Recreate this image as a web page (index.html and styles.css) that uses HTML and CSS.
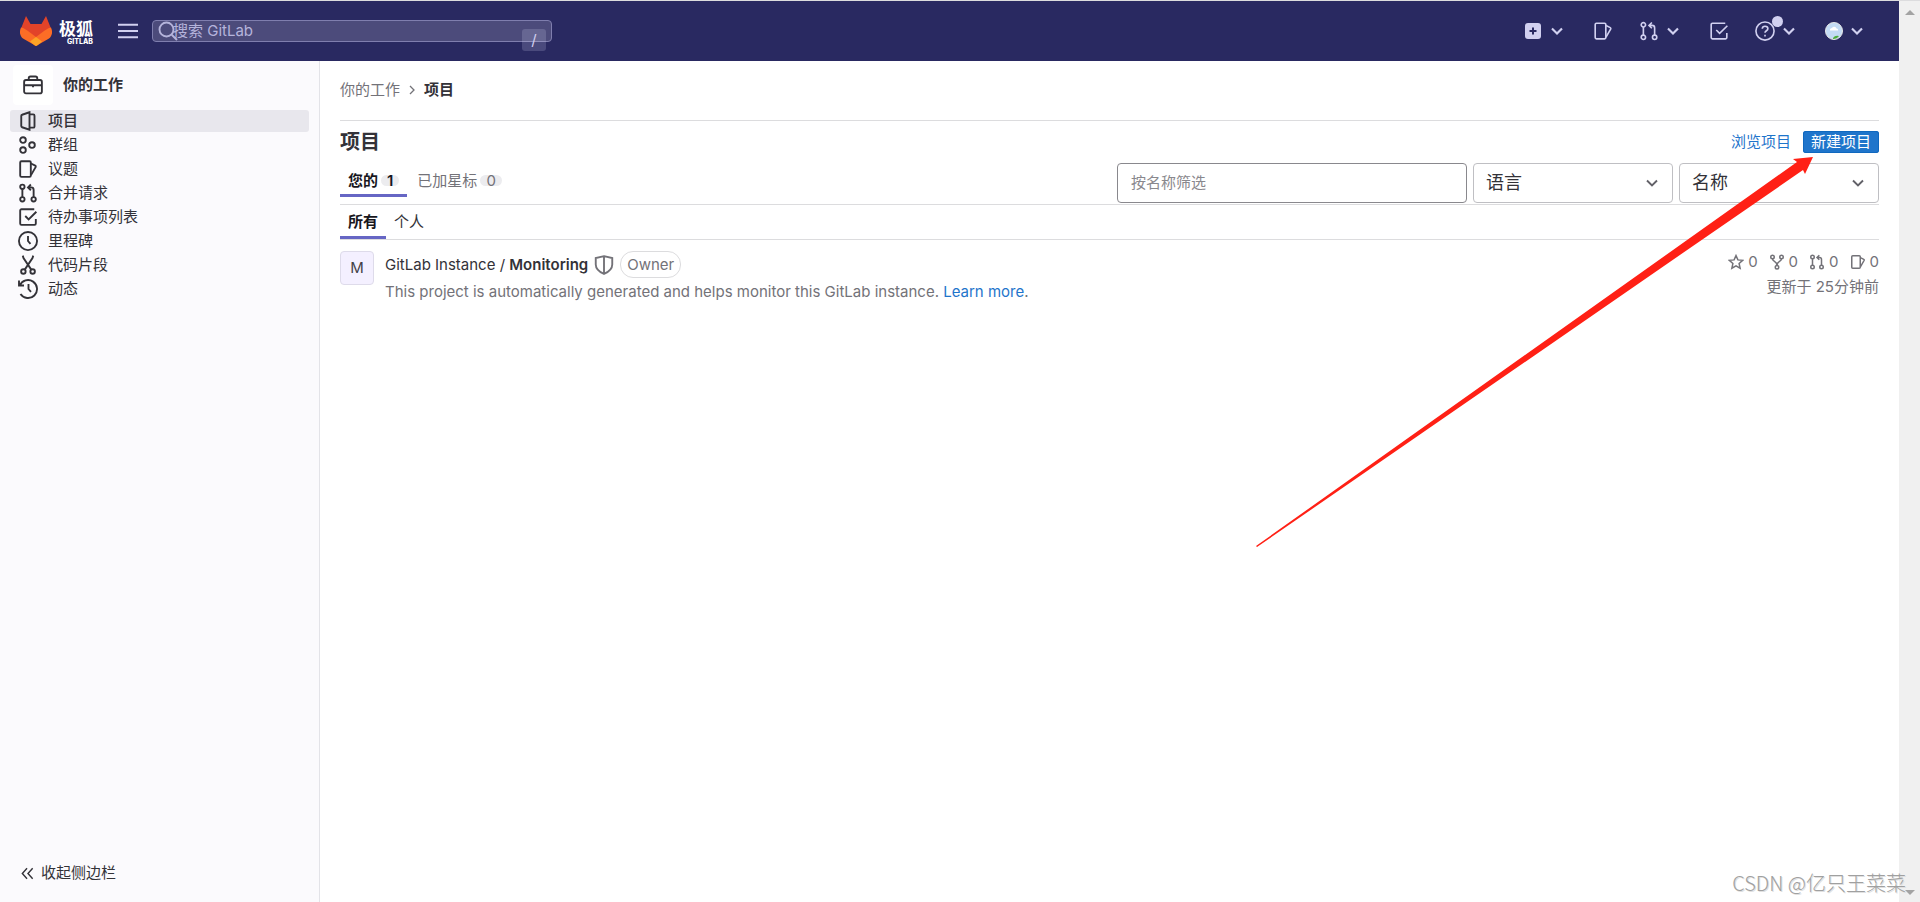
FILE: index.html
```html
<!DOCTYPE html>
<html lang="zh-CN">
<head>
<meta charset="utf-8">
<title>项目 · GitLab</title>
<link rel="stylesheet" href="styles.css">
</head>
<body>
<svg class="sprite" aria-hidden="true">
  <symbol id="i-chevron" viewBox="0 0 16 16"><path d="M4 6l4 4 4-4"/></symbol>
  <symbol id="i-menu" viewBox="0 0 16 16"><path d="M0 3h16M0 8h16M0 13h16"/></symbol>
  <symbol id="i-search" viewBox="0 0 16 16"><circle cx="6.8" cy="6.8" r="5.6"/><path d="M11 11l4.2 4.2"/></symbol>
  <symbol id="i-issues" viewBox="0 0 16 16"><rect x="1.75" y="1.75" width="8.5" height="12.5" rx="1"/><path d="M10.4 3.6l3.4 1.7a.8.8 0 0 1 .4 1l-3.8 6.6"/></symbol>
  <symbol id="i-merge" viewBox="0 0 16 16"><circle cx="3.5" cy="3" r="1.75"/><circle cx="3.5" cy="13" r="1.75"/><circle cx="12.5" cy="13" r="1.75"/><path d="M3.5 4.8v6.4M12.5 11.2V5.5a2 2 0 0 0-2-2H8.6M10.3 1.2L8 3.5l2.3 2.3"/></symbol>
  <symbol id="i-todo" viewBox="0 0 16 16"><path d="M13 1.75H2.75a1 1 0 0 0-1 1v10.5a1 1 0 0 0 1 1h10.5a1 1 0 0 0 1-1V9.5M5.8 7.2l2.7 2.7L14.7 3.8"/></symbol>
  <symbol id="i-project" viewBox="0 0 16 16"><path d="M9.2 1L3.3 3a1 1 0 0 0-.7 1v8a1 1 0 0 0 .7 1l5.9 2zM9.2 2.7h3a1 1 0 0 1 1 1v8.6a1 1 0 0 1-1 1h-3"/></symbol>
  <symbol id="i-group" viewBox="0 0 16 16"><circle cx="4" cy="4" r="2.25"/><circle cx="4" cy="12" r="2.25"/><circle cx="11.2" cy="8" r="2.25"/></symbol>
  <symbol id="i-clock" viewBox="0 0 16 16"><circle cx="8" cy="8" r="7.25"/><path d="M8 4v4l2 2.3"/></symbol>
  <symbol id="i-snippet" viewBox="0 0 16 16"><circle cx="4.3" cy="13.2" r="1.8"/><circle cx="11.7" cy="13.2" r="1.8"/><path d="M3.8.5l.6 2 6.2 9.2M12.2.5l-.6 2-6.2 9.2"/></symbol>
  <symbol id="i-history" viewBox="0 0 16 16"><path d="M1.4 5.2A7.2 7.2 0 1 1 2 12M.8 1.2v4h4M8.4 4v4l2 2.3"/></symbol>
  <symbol id="i-work" viewBox="0 0 16 16"><rect x=".9" y="4" width="14.2" height="10.7" rx="1.5"/><path d="M4.6 4V2.6a1.4 1.4 0 0 1 1.4-1.4h4a1.4 1.4 0 0 1 1.4 1.4V4M1 8.2h14M8 8v1.8"/></symbol>
  <symbol id="i-help" viewBox="0 0 16 16"><circle cx="8" cy="8" r="7.25"/><path d="M5.8 6.2A2.2 2.2 0 0 1 8 4.2c1.3 0 2.3.8 2.3 2 0 1.6-2.3 1.6-2.3 3.2M8 11v1.4"/></symbol>
  <symbol id="i-star" viewBox="0 0 16 16"><path d="M8 1.6l1.9 4.3 4.8.4-3.6 3.2 1 4.7L8 11.8l-4.1 2.4 1-4.7-3.6-3.2 4.8-.4z"/></symbol>
  <symbol id="i-fork" viewBox="0 0 16 16"><circle cx="3.5" cy="3" r="1.75"/><circle cx="12.5" cy="3" r="1.75"/><circle cx="8" cy="13.2" r="1.75"/><path d="M3.5 4.8c0 3.2 4.500 2 4.500 6.6M12.5 4.8c0 3.2-4.500 2-4.500 6.6"/></symbol>
  <symbol id="i-shield" viewBox="0 0 16 16"><path d="M8 .9l6.600 1.500v5.100c0 3.200-2.600 5.800-6.600 7.600-4-1.800-6.600-4.400-6.600-7.600V2.400zM8 1v14"/></symbol>
  <symbol id="i-collapse" viewBox="0 0 16 16"><path d="M7.500 2.500L2.500 8l5 5.500M13.500 2.500L8.500 8l5 5.500"/></symbol>
</svg>
<div class="window">
  <div class="page">
    <header class="topbar">
      <a class="brand" href="#" aria-label="极狐 GitLab">
        <svg class="fox" viewBox="0 0 32 30"><path fill="#e24329" d="M6 0L1 12.500 0 17l16 13 16-13-1-4.500L26 0l-4.500 8h-11z"/><path fill="#fc6d26" d="M1 11.500c-2 4.500-1 8.500 2 11L16 30l13-7.500c3-2.500 4-6.500 2-11-3 .6-5 2-7 3.500l-8 6-8-6c-2-1.500-4-2.900-7-3.500z"/><path fill="#fca326" d="M10 25.500l6-4.500 6 4.500-4.500 3.700a2.500 2.500 0 0 1-3 0z"/></svg>
        <span class="wordmark"><b>极狐</b><small>GITLAB</small></span>
      </a>
      <button class="menu" aria-label="菜单"><svg class="icon"><use href="#i-menu"/></svg></button>
      <form class="search">
        <svg class="icon search-icon"><use href="#i-search"/></svg>
        <input type="text" placeholder="搜索 GitLab" aria-label="搜索 GitLab">
        <kbd>/</kbd>
      </form>
      <nav class="tools" aria-label="工具">
        <button aria-label="新建"><svg class="plus" viewBox="0 0 16 16"><rect width="16" height="16" rx="3" fill="#d1d0f0"/><path d="M8 4.500v7M4.500 8h7" stroke="#292961" stroke-width="2"/></svg><svg class="icon caret"><use href="#i-chevron"/></svg></button>
        <button aria-label="议题"><svg class="icon"><use href="#i-issues"/></svg></button>
        <button aria-label="合并请求"><svg class="icon"><use href="#i-merge"/></svg><svg class="icon caret"><use href="#i-chevron"/></svg></button>
        <button aria-label="待办事项"><svg class="icon"><use href="#i-todo"/></svg></button>
        <button class="help" aria-label="帮助"><svg class="icon"><use href="#i-help"/></svg><i class="dot"></i><svg class="icon caret"><use href="#i-chevron"/></svg></button>
        <button aria-label="用户"><svg class="avatar" viewBox="0 0 18 18"><circle cx="9" cy="9" r="8.500" fill="#c3dbf5" stroke="#e6e6e6"/><path d="M5 8.500a2 2 0 0 1 2-2.500 2.500 2.500 0 0 1 4.500.5A1.500 1.500 0 0 1 13 8.500z" fill="#fff"/><path d="M8 16q2-3 6-2-2 3-6 3z" fill="#4cad3d"/></svg><svg class="icon caret"><use href="#i-chevron"/></svg></button>
      </nav>
    </header>
    <div class="body">
      <aside class="sidebar">
        <div class="context"><span class="context-icon"><svg class="icon"><use href="#i-work"/></svg></span><strong>你的工作</strong></div>
        <nav class="side-nav" aria-label="你的工作">
          <a class="active" href="#"><svg class="icon"><use href="#i-project"/></svg>项目</a>
          <a href="#"><svg class="icon"><use href="#i-group"/></svg>群组</a>
          <a href="#"><svg class="icon"><use href="#i-issues"/></svg>议题</a>
          <a href="#"><svg class="icon"><use href="#i-merge"/></svg>合并请求</a>
          <a href="#"><svg class="icon"><use href="#i-todo"/></svg>待办事项列表</a>
          <a href="#"><svg class="icon"><use href="#i-clock"/></svg>里程碑</a>
          <a href="#"><svg class="icon"><use href="#i-snippet"/></svg>代码片段</a>
          <a href="#"><svg class="icon"><use href="#i-history"/></svg>动态</a>
        </nav>
        <button class="collapse"><svg class="icon"><use href="#i-collapse"/></svg>收起侧边栏</button>
      </aside>
      <main class="content">
        <nav class="breadcrumb" aria-label="面包屑"><a href="#">你的工作</a><svg class="icon"><use href="#i-chevron"/></svg><a class="current" href="#">项目</a></nav>
        <div class="title-row">
          <h1>项目</h1>
          <div class="actions"><a href="#">浏览项目</a><button class="primary">新建项目</button></div>
        </div>
        <div class="filter-row">
          <nav class="tabs" aria-label="项目列表">
            <a class="selected" href="#">您的<span class="count">1</span></a>
            <a href="#">已加星标<span class="count">0</span></a>
          </nav>
          <form class="filters">
            <input type="text" placeholder="按名称筛选" aria-label="按名称筛选">
            <div class="select"><select aria-label="语言"><option>语言</option></select><svg class="icon"><use href="#i-chevron"/></svg></div>
            <div class="select"><select aria-label="排序"><option>名称</option></select><svg class="icon"><use href="#i-chevron"/></svg></div>
          </form>
        </div>
        <nav class="tabs subtabs" aria-label="范围"><a class="selected" href="#">所有</a><a href="#">个人</a></nav>
        <article class="project">
          <span class="letter">M</span>
          <div class="summary">
            <h2><a href="#">GitLab Instance / <b>Monitoring</b></a><svg class="icon"><use href="#i-shield"/></svg><span class="role">Owner</span></h2>
            <p>This project is automatically generated and helps monitor this GitLab instance. <a href="#">Learn more</a>.</p>
          </div>
          <div class="meta">
            <div class="stats">
              <a href="#"><svg class="icon"><use href="#i-star"/></svg>0</a>
              <a href="#"><svg class="icon"><use href="#i-fork"/></svg>0</a>
              <a href="#"><svg class="icon"><use href="#i-merge"/></svg>0</a>
              <a href="#"><svg class="icon"><use href="#i-issues"/></svg>0</a>
            </div>
            <span>更新于 25分钟前</span>
          </div>
        </article>
      </main>
    </div>
  </div>
  <div class="scroll" aria-hidden="true">
    <svg viewBox="0 0 10 5"><path d="M0 5l5-5 5 5z"/></svg>
    <svg viewBox="0 0 10 5"><path d="M0 0l5 5 5-5z"/></svg>
  </div>
  <svg class="arrow" viewBox="0 0 558 392" aria-hidden="true"><path d="M557 1L537 3l4 3L0 390l1 1L547 14l2 4z"/></svg>
  <span class="watermark">CSDN @亿只王菜菜</span>
</div>
</body>
</html>
```
FILE: styles.css
```css
* { box-sizing: border-box; }
body {
  margin: 0;
  color: #333238;
  background: #fff;
  font: 15px/22px Inter, "Noto Sans CJK SC", sans-serif;
}
a { color: inherit; text-decoration: none; }
button, input, select { font: inherit; color: inherit; }
button { display: flex; align-items: center; padding: 0; border: 0; background: none; }
h1, h2, p { margin: 0; }
.sprite { position: absolute; width: 0; height: 0; }
.icon { flex: none; width: 20px; height: 20px; fill: none; stroke: currentColor; stroke-width: 1.5; }
.window { position: relative; display: flex; min-height: 100vh; border-top: 1px solid #dcdcde; }
.page { flex: 1; display: flex; flex-direction: column; min-width: 0; }

.topbar { display: flex; align-items: center; height: 60px; padding: 0 32px 0 20px; background: #292961; color: #d1d0f0; }
.brand { display: flex; align-items: center; gap: 7px; color: #fff; }
.fox { width: 32px; height: 30px; }
.wordmark { display: flex; flex-direction: column; align-items: flex-end; padding-top: 4px; }
.wordmark b { font-size: 17px; line-height: 18px; }
.wordmark small { font-size: 7px; line-height: 8px; font-weight: 800; }
.menu { margin-left: 25px; }
.search { position: relative; width: 400px; margin-left: 14px; }
.search input { display: block; width: 100%; height: 22px; padding: 0 20px; border: 1px solid #7f7eae; border-radius: 4px; background: #4c4b7b; }
.search input::placeholder { color: #b5b4db; opacity: 1; }
.search-icon { position: absolute; left: 6px; top: 1px; color: #b5b4db; }
.search kbd { position: absolute; right: 6px; top: 9px; width: 24px; height: 22px; border-radius: 3px; background: rgba(209, 208, 240, .2); text-align: center; font: inherit; }
.tools { display: flex; align-items: center; gap: 26px; margin-left: auto; }
.tools button { gap: 4px; }
.tools .icon { stroke-width: 1.3; }
.tools .caret { stroke-width: 1.7; }
.plus { width: 16px; height: 16px; margin: 0 2px; }
.avatar { width: 18px; height: 18px; }
.help { position: relative; }
.dot { position: absolute; left: 17px; top: -5px; width: 11px; height: 11px; border-radius: 50%; background: #d1d0f0; }

.body { flex: 1; display: flex; }
.sidebar { display: flex; flex-direction: column; width: 320px; padding: 4px 10px 18px; border-right: 1px solid #e3e3e8; background: #fbfafd; }
.context { display: flex; align-items: center; gap: 10px; padding-left: 3px; }
.context-icon { display: grid; place-items: center; width: 40px; height: 40px; border-radius: 4px; background: #fff; }
.side-nav { display: flex; flex-direction: column; gap: 2px; margin-top: 5px; }
.side-nav a { display: flex; align-items: center; gap: 10px; height: 22px; padding-left: 8px; border-radius: 3px; }
.side-nav .active { background: #e8e7ed; font-weight: 500; }
.collapse { gap: 6px; margin-top: auto; padding-left: 10px; }
.collapse .icon { width: 15px; height: 15px; }

.content { flex: 1; min-width: 0; padding: 0 20px; }
.breadcrumb { display: flex; align-items: center; gap: 4px; height: 60px; padding-bottom: 2px; border-bottom: 1px solid #dcdcde; color: #737278; }
.breadcrumb .icon { transform: rotate(-90deg); width: 16px; height: 16px; stroke-width: 1.3; }
.breadcrumb .current { color: #333238; font-weight: 700; }
.title-row { display: flex; align-items: center; justify-content: space-between; height: 42px; }
h1 { font-size: 20px; line-height: 24px; font-weight: 700; }
.actions { display: flex; align-items: center; gap: 12px; color: #1f75cb; }
.primary { height: 22px; padding: 0 8px; border-radius: 3px; background: #1f75cb; box-shadow: inset 0 0 0 1px #1068bf; color: #fff; }
.filter-row { display: flex; justify-content: space-between; height: 42px; border-bottom: 1px solid #dcdcde; }
.tabs { display: flex; gap: 2px; align-items: flex-start; color: #737278; }
.tabs a { display: flex; align-items: center; gap: 3px; height: 34px; padding: 4px 8px 0; border-bottom: 3px solid transparent; }
.tabs .selected { border-color: #6666c4; color: #18171d; font-weight: 600; }
.count { padding: 0 6px; border-radius: 6px; background: #ececef; line-height: 11px; }
.filters { display: flex; gap: 6px; height: 40px; }
.filters > input { width: 350px; padding: 0 13px; border: 1px solid #89888d; border-radius: 4px; }
.filters > input::placeholder { color: #89888d; opacity: 1; }
.select { position: relative; width: 200px; }
.select select { width: 100%; height: 40px; padding: 0 12px; border: 1px solid #bfbfc3; border-radius: 4px; appearance: none; background: #fff; font-size: 18px; }
.select .icon { position: absolute; right: 11px; top: 10px; color: #626168; }
.subtabs { height: 35px; border-bottom: 1px solid #dcdcde; color: #333238; gap: 0; }
.subtabs a { padding-top: 2px; }

.project { display: flex; padding-top: 11px; color: #737278; }
.letter { display: grid; place-items: center; width: 34px; height: 34px; margin-right: 11px; border: 1px solid #dedbea; border-radius: 4px; background: #f4f0ff; color: #434248; }
.summary { flex: 1; }
h2 { display: flex; align-items: center; gap: 6px; color: #333238; font-size: 15px; font-weight: 400; }
h2 b { font-weight: 600; }
h2 .icon { color: #737278; }
.role { padding: 0 6px; border: 1px solid #dcdcde; border-radius: 13px; line-height: 25px; color: #737278; }
.summary p { padding-top: 3px; }
.summary p a { color: #1f75cb; }
.meta { display: flex; flex-direction: column; align-items: flex-end; gap: 3px; }
.stats { display: flex; gap: 11px; }
.stats a { display: flex; align-items: center; gap: 4px; }
.stats .icon { width: 16px; height: 16px; }

.scroll { display: flex; flex-direction: column; justify-content: space-between; align-items: center; width: 21px; padding: 9px 0 7px; background: #f0f0f0; }
.scroll svg { width: 10px; height: 5px; fill: #a3a3a3; }
.arrow { position: absolute; right: 106px; top: 155px; width: 558px; height: 392px; fill: #ff2015; pointer-events: none; }
.watermark { position: absolute; right: 14px; bottom: 6px; color: #a0a0a0; font: 300 20px/26px "Noto Sans CJK SC", sans-serif; text-shadow: 1px 1px 0 #e0e0e0; }
```
